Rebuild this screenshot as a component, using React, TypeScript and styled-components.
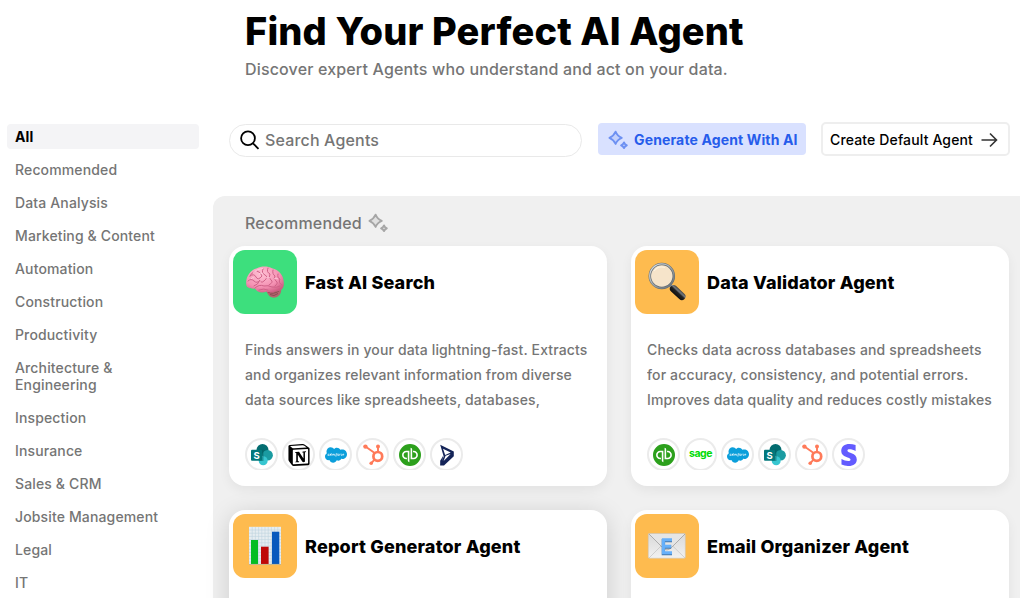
import React from "react";
import styled, { createGlobalStyle, css } from "styled-components";
import { SiNotion, SiQuickbooks } from "react-icons/si";
import { FaSalesforce, FaStripeS } from "react-icons/fa";

const Global = createGlobalStyle`
  * { box-sizing: border-box; }
  html, body { margin: 0; padding: 0; background: #fff; overflow: hidden; }
  body { font-family: Inter, "Liberation Sans", sans-serif; color: #000; }
`;

const Page = styled.div`
  width: 1020px;
  height: 598px;
  overflow: hidden;
  display: flex;
  flex-direction: column;
`;

const Header = styled.header`
  height: 122px;
  flex: none;
  padding: 7px 0 0 245px;
`;

const Title = styled.h1`
  margin: 0;
  font-size: 38px;
  line-height: 48px;
  font-weight: 800;
  letter-spacing: 0.15px;
  white-space: nowrap;
`;

const Subtitle = styled.p`
  margin: 4px 0 0;
  font-size: 16px;
  line-height: 20px;
  font-weight: 500;
  letter-spacing: 0.01em;
  color: #757575;
`;

const Body = styled.div`
  display: flex;
  flex: 1;
  min-height: 0;
`;

const Sidebar = styled.nav`
  width: 213px;
  flex: none;
  padding: 2px 14px 0 7px;
  display: flex;
  flex-direction: column;
  gap: 8px;
`;

const NavItem = styled.a<{ $active?: boolean }>`
  padding: 4px 24px 4px 8px;
  border-radius: 4px;
  font-size: 14px;
  line-height: 17px;
  font-weight: 500;
  letter-spacing: 0.01em;
  color: #757575;
  ${(p) => p.$active && css`
    background: #f4f4f6;
    color: #000;
    font-weight: 700;
  `}
`;

const Main = styled.main`
  flex: 1;
  min-width: 0;
  display: flex;
  flex-direction: column;
`;

const Toolbar = styled.div`
  height: 74px;
  flex: none;
  display: flex;
  align-items: flex-start;
  padding: 0 10px 0 16px;
`;

const SearchBox = styled.label`
  width: 353px;
  height: 33px;
  margin-top: 2px;
  border: 1px solid #e9e9e9;
  border-radius: 17px;
  display: flex;
  align-items: center;
  padding: 0 0 1px 10px;
  gap: 5px;
`;

const SearchInput = styled.input`
  border: 0;
  outline: 0;
  padding: 0;
  flex: 1;
  background: transparent;
  font: 500 16px/20px Inter, sans-serif;
  letter-spacing: 0.01em;
  &::placeholder { color: #757575; opacity: 1; }
`;

const Button = styled.button<{ $primary?: boolean }>`
  display: flex;
  align-items: center;
  width: 189px;
  height: 34px;
  margin-left: 15px;
  padding: 1px 8px 0 7px;
  gap: 8px;
  border: 2px solid #eeeeee;
  border-radius: 5px;
  background: #fff;
  color: #000;
  font: 500 14px/20px Inter, sans-serif;
  letter-spacing: 0.01em;
  white-space: nowrap;
  ${(p) => p.$primary && css`
    width: 208px;
    height: 32px;
    margin: 1px 0 0 16px;
    border: 0;
    gap: 6px;
    padding: 1px 8px 0 10px;
    border-radius: 4px;
    background: #d9e1ff;
    color: #265ceb;
    font-weight: 700;
  `}
`;

const Panel = styled.section`
  flex: 1;
  background: #f0f0f0;
  border-top-left-radius: 12px;
  padding: 16px 11px 0 16px;
`;

const SectionTitle = styled.h2`
  margin: 0;
  height: 34px;
  padding: 1px 0 0 16px;
  display: flex;
  align-items: flex-start;
  gap: 6px;
  font-size: 16px;
  line-height: 20px;
  font-weight: 500;
  letter-spacing: 0.01em;
  color: #757575;
`;

const Grid = styled.div`
  display: grid;
  grid-template-columns: 378px 378px;
  grid-auto-rows: 240px;
  gap: 24px;
`;

const Card = styled.article<{ $raised?: boolean }>`
  background: #fff;
  border-radius: 16px;
  padding: 4px;
  box-shadow: ${(p) => (p.$raised ? "0 4px 24px rgba(0,0,0,.15)" : "0 4px 12px rgba(0,0,0,.06)")};
`;

const CardHead = styled.div`
  display: flex;
  align-items: center;
  gap: 8px;
`;

const Tile = styled.div<{ $color: string }>`
  width: 64px;
  height: 64px;
  border-radius: 12px;
  background: ${(p) => p.$color};
  svg { display: block; }
`;

const CardTitle = styled.h3`
  margin: 0;
  padding-top: 1px;
  font-size: 18px;
  line-height: 24px;
  font-weight: 800;
  letter-spacing: 0.01em;
`;

const Description = styled.p`
  margin: 23px 0 0 12px;
  height: 77px;
  overflow: hidden;
  font-size: 14px;
  line-height: 25.2px;
  font-weight: 500;
  letter-spacing: 0.01em;
  color: #757575;
  white-space: pre-line;
`;

const Sources = styled.div`
  margin: 24px 0 0 12px;
  height: 32px;
  overflow: hidden;
  display: flex;
  gap: 4px;
`;

const Source = styled.span`
  width: 33px;
  height: 33px;
  flex: none;
  border-radius: 50%;
  border: 2px solid #ebebeb;
  display: flex;
  align-items: center;
  justify-content: center;
  svg { display: block; flex: none; }
`;

const Sparkles = () => (
  <svg width="20" height="20" viewBox="0 0 20 20" fill="currentColor" fillOpacity=".2" stroke="currentColor" strokeWidth="1.8" strokeLinejoin="round" opacity=".6">
    <path d="M7.6 1.6Q9.2 6 13.8 7.8Q9.2 9.6 7.6 14Q5.8 9.6 1.4 7.8Q5.8 6 7.6 1.6Z" />
    <path d="M16 12.4Q16.7 14.5 18.9 15.3Q16.7 16.1 16 18.2Q15.2 16.1 13.1 15.3Q15.2 14.5 16 12.4Z" />
  </svg>
);

const SearchIcon = () => (
  <svg width="20" height="20" viewBox="0 0 20 20" fill="none" stroke="#000" strokeWidth="1.8">
    <circle cx="8" cy="8.3" r="6.9" />
    <path d="M13 13.4L18.5 18.8" />
  </svg>
);

const ArrowIcon = () => (
  <svg width="17" height="16" viewBox="0 0 17 16" fill="none" stroke="#333" strokeWidth="1.6">
    <path d="M.5 8H15.5M9 1.5L15.5 8L9 14.5" />
  </svg>
);

const Brain = () => (
  <svg width="64" height="64" viewBox="0 0 64 64">
    <defs>
      <radialGradient id="brainFill" cx=".4" cy=".3" r=".75">
        <stop offset="0" stopColor="#ffc1d4" />
        <stop offset=".65" stopColor="#f490b2" />
        <stop offset="1" stopColor="#cf5c83" />
      </radialGradient>
    </defs>
    <path d="M33 40C35 46 38 48 42 47.6C46 47 49 43 48 38Z" fill="#b5656e" />
    <path d="M35 42Q40 45 46 41M37 44.5Q41 47 45 43.5" fill="none" stroke="#7d3b46" strokeWidth=".7" />
    <path d="M13.2 34C12.6 26 18 19.5 24 18.2C28 15.8 35 15.8 39 18.2C46 19.6 51.4 26 50.8 34C51 39 47 42 43 41C40 43.6 36 42.5 33.5 41.4C30 43.4 24 42.8 22 38.6C17 39 13.3 37.8 13.2 34Z" fill="url(#brainFill)" />
    <g fill="none" stroke="#cf6288" strokeWidth="1" strokeLinecap="round">
      <path d="M15 31Q18 28 21 31T27 30Q25 35 21 36M17 26Q21 23 23 27T29 26Q28 22 24 21M22 38Q26 34 31 36Q35 35 39 37Q44 38 47 36M26 40Q31 38 35 40M30 19Q28 23 32 25T31 31Q29 33 28 32M35 18Q33 22 37 24Q35 28 38 30T36 35M40 20Q39 24 42 26Q40 29 43 31T42 36M45 24Q44 28 47 29Q45 33 49 35M21 22Q18 23 17 26" />
    </g>
    <path d="M20 23Q24 18.5 30 18.4M18 29Q19 27 21 28M26 24Q28 22 30 24M33 28Q35 26 37 28M41 29Q43 27 45 29" fill="none" stroke="#ffd0df" strokeWidth=".8" />
  </svg>
);

const Magnifier = () => (
  <svg width="64" height="64" viewBox="0 0 64 64">
    <defs>
      <linearGradient id="handle" x1="0" y1="1" x2="1" y2="0">
        <stop offset="0" stopColor="#080808" />
        <stop offset=".5" stopColor="#222" />
        <stop offset=".65" stopColor="#777b7f" />
        <stop offset="1" stopColor="#111" />
      </linearGradient>
      <linearGradient id="rim" x1="0" y1="0" x2="1" y2="1">
        <stop offset="0" stopColor="#e4e8ea" />
        <stop offset="1" stopColor="#60686f" />
      </linearGradient>
    </defs>
    <path d="M35.2 35.2L39 39" stroke="#9aa0a5" strokeWidth="3.5" />
    <path d="M38.6 38.8L46.8 46.4" stroke="url(#handle)" strokeWidth="7.4" strokeLinecap="round" />
    <path d="M40.3 37.6L48 44.8" stroke="#6b6f73" strokeWidth="1" />
    <circle cx="26.8" cy="26" r="12" fill="#f6e4ca" stroke="#5f6a72" strokeWidth="2.5" />
    <circle cx="26.8" cy="26" r="12.1" fill="none" stroke="url(#rim)" strokeWidth="1.3" />
    <path d="M19 21Q23 15.5 30 17.5" stroke="#fff3df" strokeWidth="1.2" fill="none" />
  </svg>
);

const BarChart = () => (
  <svg width="64" height="64" viewBox="0 0 64 64">
    <rect x="16" y="12.8" width="32" height="38" fill="#e6edf1" />
    <path d="M19.2 13V50M22.4 13V50M25.6 13V50M28.8 13V50M32 13V50M35.2 13V50M38.4 13V50M41.6 13V50M44.8 13V50M16 16H48M16 19.2H48M16 22.4H48M16 25.6H48M16 28.8H48M16 32H48M16 35.2H48M16 38.4H48M16 41.6H48M16 44.8H48M16 48H48" stroke="#bfd4df" strokeWidth=".6" />
    <rect x="18" y="26" width="7" height="24" fill="#04bd22" />
    <rect x="28" y="32.7" width="7.6" height="17.3" fill="#bf0808" />
    <rect x="39" y="17.7" width="7.3" height="32.3" fill="#0759bd" />
    <path d="M16 50.4H48" stroke="#b9a36d" strokeWidth=".8" />
  </svg>
);

const Envelope = () => (
  <svg width="64" height="64" viewBox="0 0 64 64">
    <defs>
      <linearGradient id="paper" x1="0" y1="0" x2="0" y2="1">
        <stop offset="0" stopColor="#d9d9d9" />
        <stop offset="1" stopColor="#f1f1f1" />
      </linearGradient>
    </defs>
    <rect x="13.3" y="19.5" width="37" height="24.7" rx="1" fill="url(#paper)" stroke="#c7c5bf" strokeWidth=".5" />
    <path d="M14 44L26.5 31.5M50 44L37.2 31.5" stroke="#c2c2c2" strokeWidth=".7" />
    <path d="M14 20L28.5 34.5Q32 37.5 35.5 34.5L50 20" fill="#e5e5e5" stroke="#959595" strokeWidth=".7" />
    <path d="M37 25.8H28.4V38.8H37M28.4 32.2H36.2" transform="translate(0 .8)" fill="none" stroke="#4478ac" strokeWidth="3.4" />
    <path d="M37 25.8H28.4V38.8H37M28.4 32.2H36.2" fill="none" stroke="#67b0fa" strokeWidth="3" />
  </svg>
);

const SharePoint = () => (
  <svg width="24" height="24" viewBox="0 0 24 24">
    <circle cx="12.5" cy="7" r="6" fill="#036c70" />
    <circle cx="17.6" cy="12.2" r="5.3" fill="#1a9ba1" />
    <circle cx="13.2" cy="17.8" r="4.5" fill="#37c6d0" />
    <path d="M8 6.5H13.5V18H9Z" fill="#035f63" opacity=".5" />
    <rect x="1" y="6.8" width="11" height="11" rx="1" fill="#03787c" />
    <text x="6.5" y="15.7" textAnchor="middle" fontFamily="Inter" fontWeight="700" fontSize="9.5" fill="#fff">S</text>
  </svg>
);

const Hubspot = () => (
  <svg width="24" height="24" viewBox="0 0 24 24" fill="none" stroke="#ff7a59">
    <circle cx="16.8" cy="13.4" r="4.4" strokeWidth="2.7" />
    <path d="M17 9V4M4.8 3.8L14 10.3M13.6 16.6L10.4 20" strokeWidth="1.9" />
    <g fill="#ff7a59" stroke="none">
      <circle cx="4.4" cy="3.6" r="2.2" />
      <circle cx="17" cy="3.6" r="2" />
      <circle cx="10.2" cy="20.3" r="1.8" />
    </g>
  </svg>
);

const Wordmark = styled.span`
  color: #00dc06;
  font-size: 10.5px;
  line-height: 16px;
  font-weight: 700;
  letter-spacing: -0.5px;
  padding-bottom: 2px;
`;

const Dynamics = () => (
  <svg width="24" height="24" viewBox="0 0 24 24" fill="#142458">
    <path d="M5.2 1.8L18.8 8.6V13.2L9 22.5H5.2L8.7 13.5Z" />
    <path d="M8 5.8L15.7 9.6L10.2 12Z" fill="#fff" />
    <path d="M10.6 12.8L15.6 11L8.6 18Z" fill="#fff" />
    <path d="M5.2 17.7L8.2 12.8L7.2 20.2L5.2 22.5Z" />
  </svg>
);

const logos: Record<string, React.ReactNode> = {
  sharepoint: <SharePoint />,
  notion: <SiNotion size={22} color="#000" />,
  salesforce: <FaSalesforce size={22} color="#0b9fdb" />,
  hubspot: <Hubspot />,
  quickbooks: <SiQuickbooks size={22} color="#2ca01c" />,
  dynamics: <Dynamics />,
  sage: <Wordmark>sage</Wordmark>,
  stripe: <FaStripeS size={22} color="#635bff" />,
};

const categories = [
  "All", "Recommended", "Data Analysis", "Marketing & Content", "Automation",
  "Construction", "Productivity", "Architecture & Engineering", "Inspection",
  "Insurance", "Sales & CRM", "Jobsite Management", "Legal", "IT",
];

interface Agent {
  name: string;
  color: string;
  art: React.ReactNode;
  raised?: boolean;
  text?: string;
  sources?: string[];
}

const agents: Agent[] = [
  {
    name: "Fast AI Search", color: "#3ddf7d", art: <Brain />,
    text: "Finds answers in your data lightning-fast. Extracts\nand organizes relevant information from diverse\ndata sources like spreadsheets, databases,",
    sources: ["sharepoint", "notion", "salesforce", "hubspot", "quickbooks", "dynamics"],
  },
  {
    name: "Data Validator Agent", color: "#febb4f", art: <Magnifier />,
    text: "Checks data across databases and spreadsheets\nfor accuracy, consistency, and potential errors.\nImproves data quality and reduces costly mistakes",
    sources: ["quickbooks", "sage", "salesforce", "sharepoint", "hubspot", "stripe"],
  },
  { name: "Report Generator Agent", color: "#febb4f", art: <BarChart />, raised: true },
  { name: "Email Organizer Agent", color: "#febb4f", art: <Envelope /> },
];

export default function App() {
  return (
    <Page>
      <Global />
      <Header>
        <Title>Find Your Perfect AI Agent</Title>
        <Subtitle>Discover expert Agents who understand and act on your data.</Subtitle>
      </Header>
      <Body>
        <Sidebar>
          {categories.map((c, i) => <NavItem key={c} $active={i === 0}>{c}</NavItem>)}
        </Sidebar>
        <Main>
          <Toolbar>
            <SearchBox>
              <SearchIcon />
              <SearchInput placeholder="Search Agents" />
            </SearchBox>
            <Button $primary><Sparkles />Generate Agent With AI</Button>
            <Button>Create Default Agent<ArrowIcon /></Button>
          </Toolbar>
          <Panel>
            <SectionTitle>Recommended<Sparkles /></SectionTitle>
            <Grid>
              {agents.map((a) => (
                <Card key={a.name} $raised={a.raised}>
                  <CardHead>
                    <Tile $color={a.color}>{a.art}</Tile>
                    <CardTitle>{a.name}</CardTitle>
                  </CardHead>
                  {a.text && <Description>{a.text}</Description>}
                  {a.sources && (
                    <Sources>
                      {a.sources.map((s, i) => <Source key={i}>{logos[s]}</Source>)}
                    </Sources>
                  )}
                </Card>
              ))}
            </Grid>
          </Panel>
        </Main>
      </Body>
    </Page>
  );
}
